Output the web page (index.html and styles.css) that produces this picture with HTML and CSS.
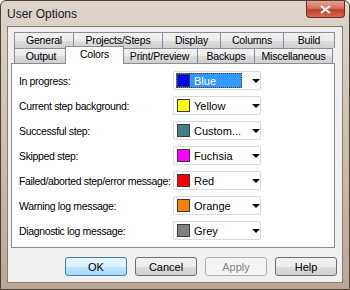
FILE: index.html
```html
<!DOCTYPE html>
<html>
<head>
    <title>User Options</title>
    <link rel="stylesheet" href="styles.css">
</head>
<body>
    <div class="window">
        <div class="titlebar">
            <span class="title">User Options</span>
            <span class="close">
                <svg width="11" height="9" viewBox="0 0 11 9">
                    <path d="M1 1 L10 8 M10 1 L1 8" stroke="#ffffff" stroke-width="2.2" fill="none"/>
                </svg>
            </span>
        </div>
        <div class="client">
            <div class="tabs">
                <div class="tab-row">
                    <div class="tab t-general">General</div>
                    <div class="tab t-projects">Projects/Steps</div>
                    <div class="tab t-display">Display</div>
                    <div class="tab t-columns">Columns</div>
                    <div class="tab t-build">Build</div>
                </div>
                <div class="tab-row">
                    <div class="tab t-output">Output</div>
                    <div class="tab t-colors selected">Colors</div>
                    <div class="tab t-print">Print/Preview</div>
                    <div class="tab t-backups">Backups</div>
                    <div class="tab t-misc">Miscellaneous</div>
                </div>
            </div>

            <div class="panel">
                <div class="row">
                    <span class="label">In progress:</span>
                    <div class="combo">
                        <div class="value focused"><span class="swatch blue"></span>Blue</div>
                        <span class="arrow"></span>
                    </div>
                </div>
                <div class="row">
                    <span class="label">Current step background:</span>
                    <div class="combo">
                        <div class="value"><span class="swatch yellow"></span>Yellow</div>
                        <span class="arrow"></span>
                    </div>
                </div>
                <div class="row">
                    <span class="label">Successful step:</span>
                    <div class="combo">
                        <div class="value"><span class="swatch custom"></span>Custom...</div>
                        <span class="arrow"></span>
                    </div>
                </div>
                <div class="row">
                    <span class="label">Skipped step:</span>
                    <div class="combo">
                        <div class="value"><span class="swatch fuchsia"></span>Fuchsia</div>
                        <span class="arrow"></span>
                    </div>
                </div>
                <div class="row">
                    <span class="label">Failed/aborted step/error message:</span>
                    <div class="combo">
                        <div class="value"><span class="swatch red"></span>Red</div>
                        <span class="arrow"></span>
                    </div>
                </div>
                <div class="row">
                    <span class="label">Warning log message:</span>
                    <div class="combo">
                        <div class="value"><span class="swatch orange"></span>Orange</div>
                        <span class="arrow"></span>
                    </div>
                </div>
                <div class="row">
                    <span class="label">Diagnostic log message:</span>
                    <div class="combo">
                        <div class="value"><span class="swatch grey"></span>Grey</div>
                        <span class="arrow"></span>
                    </div>
                </div>
            </div>

            <div class="buttons">
                <button class="btn default">OK</button>
                <button class="btn">Cancel</button>
                <button class="btn" disabled>Apply</button>
                <button class="btn">Help</button>
            </div>
        </div>
    </div>
</body>
</html>
```

FILE: styles.css
```css
body {
    margin: 0;
    font-family: "Liberation Sans", Arial, sans-serif;
    font-size: 10.5px;
    color: #000;
    background-color: #ffffff;
}
.window {
    width: 350px;
    height: 290px;
    box-sizing: border-box;
    border: 1px solid #4d3f33;
    border-radius: 6px 6px 0 0;
    background: linear-gradient(to bottom, #ddd5cd 0%, #cfc2b5 40%, #bba796 100%);
    padding: 0 6px 6px 6px;
    display: flex;
    flex-direction: column;
}
.titlebar {
    height: 25px;
    display: flex;
    justify-content: space-between;
    align-items: flex-start;
}
.title {
    font-size: 12px;
    margin-top: 6px;
    color: #1a1a1a;
}
.close {
    width: 39px;
    height: 17px;
    margin-right: -2px;
    box-sizing: border-box;
    border: 1px solid #6b2a20;
    border-top: none;
    border-radius: 0 0 4px 4px;
    background: linear-gradient(to bottom, #e8a493 0%, #d5715c 45%, #c0422b 55%, #d2694f 100%);
    display: flex;
    align-items: center;
    justify-content: center;
}
.client {
    flex: 1;
    background-color: #f0f0f0;
    border: 1px solid #8c7c6c;
    display: flex;
    flex-direction: column;
}
.tabs {
    margin: 5px 0 0 6px;
    width: 321px;
}
.tab-row {
    display: flex;
    height: 16px;
}
.tab-row + .tab-row {
    height: 15px;
}
.tab {
    box-sizing: border-box;
    border: 1px solid #898c95;
    border-bottom: none;
    margin-left: -1px;
    background: linear-gradient(to bottom, #f2f2f2 0%, #ebebeb 50%, #dddddd 51%, #cfcfcf 100%);
    text-align: center;
    line-height: 15px;
    white-space: nowrap;
    letter-spacing: -0.2px;
}
.tab:first-child {
    margin-left: 0;
}
.tab.selected {
    background: #ffffff;
    margin-top: -2px;
    height: 18px;
    position: relative;
    z-index: 1;
    margin-left: -3px;
    margin-right: -2px;
    line-height: 14px;
}
.t-general { width: 60px; }
.t-projects { width: 90px; }
.t-display { width: 59px; }
.t-columns { width: 64px; }
.t-build { width: 52px; }
.t-output { width: 54px; }
.t-colors { width: 59px; }
.t-print { width: 77px; }
.t-backups { width: 58px; }
.t-misc { width: 79px; }

.panel {
    margin-left: 3px;
    width: 324px;
    height: 185px;
    box-sizing: border-box;
    background-color: #ffffff;
    border: 1px solid #898c95;
    padding: 7px 0 0 7px;
    display: flex;
    flex-direction: column;
    gap: 6px;
}
.row {
    display: flex;
    align-items: center;
    height: 19px;
}
.label {
    width: 154px;
    white-space: nowrap;
    letter-spacing: -0.35px;
}
.combo {
    width: 88px;
    height: 19px;
    box-sizing: border-box;
    border: 1px solid #d9d9d9;
    border-radius: 2px;
    background-color: #ffffff;
    display: flex;
    align-items: center;
    padding-left: 2px;
    font-size: 11px;
}
.value {
    width: 68px;
    height: 15px;
    box-sizing: border-box;
    display: flex;
    align-items: center;
    padding-left: 1px;
    gap: 4px;
}
.value.focused {
    background-color: #3399ff;
    color: #ffffff;
    outline: 1px dotted #5a3a1a;
    outline-offset: -1px;
}
.swatch {
    width: 13px;
    height: 13px;
    box-sizing: border-box;
    border: 1px solid #3a3a3a;
}
.blue { background-color: #0000ff; }
.yellow { background-color: #ffff00; }
.custom { background-color: #408080; }
.fuchsia { background-color: #ff00ff; }
.red { background-color: #ff0000; }
.orange { background-color: #ff8000; }
.grey { background-color: #808080; }
.arrow {
    margin-left: 10px;
    width: 0;
    height: 0;
    border-left: 4px solid transparent;
    border-right: 4px solid transparent;
    border-top: 4px solid #000000;
}
.buttons {
    display: flex;
    justify-content: flex-end;
    gap: 8px;
    margin-top: 9px;
    padding-right: 5px;
}
.btn {
    width: 62px;
    height: 19px;
    padding: 0;
    font-family: "Liberation Sans", Arial, sans-serif;
    font-size: 11px;
    color: #000000;
    border: 1px solid #707070;
    border-radius: 3px;
    background: linear-gradient(to bottom, #f2f2f2 0%, #ebebeb 50%, #dddddd 51%, #cfcfcf 100%);
}
.btn.default {
    border-color: #3c7fb1;
    background: linear-gradient(to bottom, #eaf6fd 0%, #d9f0fc 50%, #bee6fd 51%, #a7d9f5 100%);
}
.btn:disabled {
    border-color: #adb2b5;
    background: #f4f4f4;
    color: #838383;
}
```
